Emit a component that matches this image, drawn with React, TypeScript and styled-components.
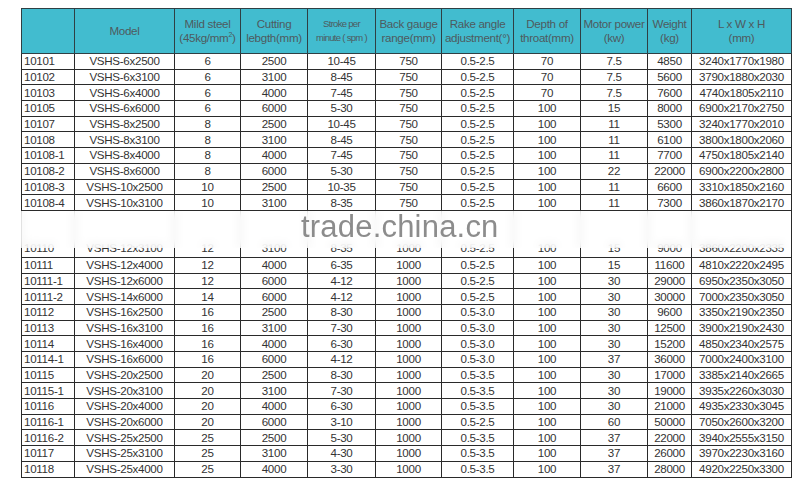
import styled, { createGlobalStyle } from 'styled-components'

const GlobalStyle = createGlobalStyle`
  html, body {
    margin: 0;
    padding: 0;
    background: #fff;
  }
  body {
    font-family: 'Liberation Sans', Arial, sans-serif;
  }
`

const Page = styled.div`
  width: 800px;
  height: 483px;
  padding: 8px 0 0 21px;
  box-sizing: border-box;
  overflow: hidden;
`

const Frame = styled.div`
  position: relative;
  width: 770px;
`

const Table = styled.table`
  width: 770px;
  table-layout: fixed;
  border-collapse: collapse;
  border: 1.5px solid #2a2a2a;
  font-size: 11.6px;
  letter-spacing: -0.3px;
  color: #333;
`

const HeadCell = styled.th<{ small?: boolean }>`
  height: 44px;
  padding: 0;
  background: #42bccf;
  border: 1px solid #2f3f44;
  color: #4e5a5e;
  font-weight: normal;
  font-size: ${(p) => (p.small ? '9.5px' : '11.6px')};
  letter-spacing: ${(p) => (p.small ? '-0.7px' : '-0.3px')};
  line-height: 14px;
  text-align: center;
  vertical-align: middle;
  white-space: nowrap;
`

const Row = styled.tr<{ tall?: boolean }>`
  height: ${(p) => (p.tall ? '47px' : '15.7px')};
`

const Cell = styled.td<{ left?: boolean; bottom?: boolean }>`
  padding: ${(p) => (p.left ? '0 0 0 2px' : '0')};
  padding-bottom: ${(p) => (p.bottom ? '3px' : '0')};
  border: 1px solid #2a2a2a;
  text-align: ${(p) => (p.left ? 'left' : 'center')};
  vertical-align: ${(p) => (p.bottom ? 'bottom' : 'middle')};
  line-height: 12px;
  white-space: nowrap;
  overflow: hidden;
`

const Sup = styled.sup`
  font-size: 7px;
  vertical-align: 5px;
  line-height: 0;
`

const Smudge = styled.div`
  position: absolute;
  left: 0;
  right: 0;
  top: 203px;
  height: 37px;
  background: rgba(255, 255, 255, 0.74);
  backdrop-filter: blur(4px);
`

const Watermark = styled.div`
  position: absolute;
  left: 280px;
  top: 206px;
  font-family: 'Liberation Sans', Arial, sans-serif;
  font-size: 31px;
  line-height: 25px;
  color: rgba(120, 120, 120, 0.85);
  letter-spacing: 0.2px;
  pointer-events: none;
`

const widths = [53, 100, 66, 67, 68, 66, 72, 67, 67, 44, 100]

const rows: string[][] = [
  ['10101', 'VSHS-6x2500', '6', '2500', '10-45', '750', '0.5-2.5', '70', '7.5', '4850', '3240x1770x1980'],
  ['10102', 'VSHS-6x3100', '6', '3100', '8-45', '750', '0.5-2.5', '70', '7.5', '5600', '3790x1880x2030'],
  ['10103', 'VSHS-6x4000', '6', '4000', '7-45', '750', '0.5-2.5', '70', '7.5', '7600', '4740x1805x2110'],
  ['10105', 'VSHS-6x6000', '6', '6000', '5-30', '750', '0.5-2.5', '100', '15', '8000', '6900x2170x2750'],
  ['10107', 'VSHS-8x2500', '8', '2500', '10-45', '750', '0.5-2.5', '100', '11', '5300', '3240x1770x2010'],
  ['10108', 'VSHS-8x3100', '8', '3100', '8-45', '750', '0.5-2.5', '100', '11', '6100', '3800x1800x2060'],
  ['10108-1', 'VSHS-8x4000', '8', '4000', '7-45', '750', '0.5-2.5', '100', '11', '7700', '4750x1805x2140'],
  ['10108-2', 'VSHS-8x6000', '8', '6000', '5-30', '750', '0.5-2.5', '100', '22', '22000', '6900x2200x2800'],
  ['10108-3', 'VSHS-10x2500', '10', '2500', '10-35', '750', '0.5-2.5', '100', '11', '6600', '3310x1850x2160'],
  ['10108-4', 'VSHS-10x3100', '10', '3100', '8-35', '750', '0.5-2.5', '100', '11', '7300', '3860x1870x2170'],
  ['10110', 'VSHS-12x3100', '12', '3100', '8-35', '1000', '0.5-2.5', '100', '15', '9000', '3860x2200x2335'],
  ['10111', 'VSHS-12x4000', '12', '4000', '6-35', '1000', '0.5-2.5', '100', '15', '11600', '4810x2220x2495'],
  ['10111-1', 'VSHS-12x6000', '12', '6000', '4-12', '1000', '0.5-2.5', '100', '30', '29000', '6950x2350x3050'],
  ['10111-2', 'VSHS-14x6000', '14', '6000', '4-12', '1000', '0.5-2.5', '100', '30', '30000', '7000x2350x3050'],
  ['10112', 'VSHS-16x2500', '16', '2500', '8-30', '1000', '0.5-3.0', '100', '30', '9600', '3350x2190x2350'],
  ['10113', 'VSHS-16x3100', '16', '3100', '7-30', '1000', '0.5-3.0', '100', '30', '12500', '3900x2190x2430'],
  ['10114', 'VSHS-16x4000', '16', '4000', '6-30', '1000', '0.5-3.0', '100', '30', '15200', '4850x2340x2575'],
  ['10114-1', 'VSHS-16x6000', '16', '6000', '4-12', '1000', '0.5-3.0', '100', '37', '36000', '7000x2400x3100'],
  ['10115', 'VSHS-20x2500', '20', '2500', '8-30', '1000', '0.5-3.5', '100', '30', '17000', '3385x2140x2665'],
  ['10115-1', 'VSHS-20x3100', '20', '3100', '7-30', '1000', '0.5-3.5', '100', '30', '19000', '3935x2260x3030'],
  ['10116', 'VSHS-20x4000', '20', '4000', '6-30', '1000', '0.5-3.5', '100', '30', '21000', '4935x2330x3045'],
  ['10116-1', 'VSHS-20x6000', '20', '6000', '3-10', '1000', '0.5-2.5', '100', '60', '50000', '7050x2600x3200'],
  ['10116-2', 'VSHS-25x2500', '25', '2500', '5-30', '1000', '0.5-3.5', '100', '37', '22000', '3940x2555x3150'],
  ['10117', 'VSHS-25x3100', '25', '3100', '4-30', '1000', '0.5-3.5', '100', '37', '26000', '3970x2230x3160'],
  ['10118', 'VSHS-25x4000', '25', '4000', '3-30', '1000', '0.5-3.5', '100', '37', '28000', '4920x2250x3300'],
]

export default function App() {
  return (
    <>
      <GlobalStyle />
      <Page>
        <Frame>
          <Table>
            <colgroup>
              {widths.map((w, i) => (
                <col key={i} style={{ width: w }} />
              ))}
            </colgroup>
            <thead>
              <tr>
                <HeadCell />
                <HeadCell>Model</HeadCell>
                <HeadCell>
                  Mild steel
                  <br />
                  (45kg/mm<Sup>2</Sup>)
                </HeadCell>
                <HeadCell>
                  Cutting
                  <br />
                  lebgth(mm)
                </HeadCell>
                <HeadCell small>
                  Stroke per
                  <br />
                  minute ( spm )
                </HeadCell>
                <HeadCell>
                  Back gauge
                  <br />
                  range(mm)
                </HeadCell>
                <HeadCell>
                  Rake angle
                  <br />
                  adjustment(°)
                </HeadCell>
                <HeadCell>
                  Depth of
                  <br />
                  throat(mm)
                </HeadCell>
                <HeadCell>
                  Motor power
                  <br />
                  (kw)
                </HeadCell>
                <HeadCell>
                  Weight
                  <br />
                  (kg)
                </HeadCell>
                <HeadCell>
                  L x W x H
                  <br />
                  (mm)
                </HeadCell>
              </tr>
            </thead>
            <tbody>
              {rows.map((r) => {
                const tall = r[0] === '10110'
                return (
                  <Row key={r[0]} tall={tall}>
                    {r.map((v, i) => (
                      <Cell key={i} left={i === 0} bottom={tall}>
                        {v}
                      </Cell>
                    ))}
                  </Row>
                )
              })}
            </tbody>
          </Table>
          <Smudge />
          <Watermark>trade.china.cn</Watermark>
        </Frame>
      </Page>
    </>
  )
}
